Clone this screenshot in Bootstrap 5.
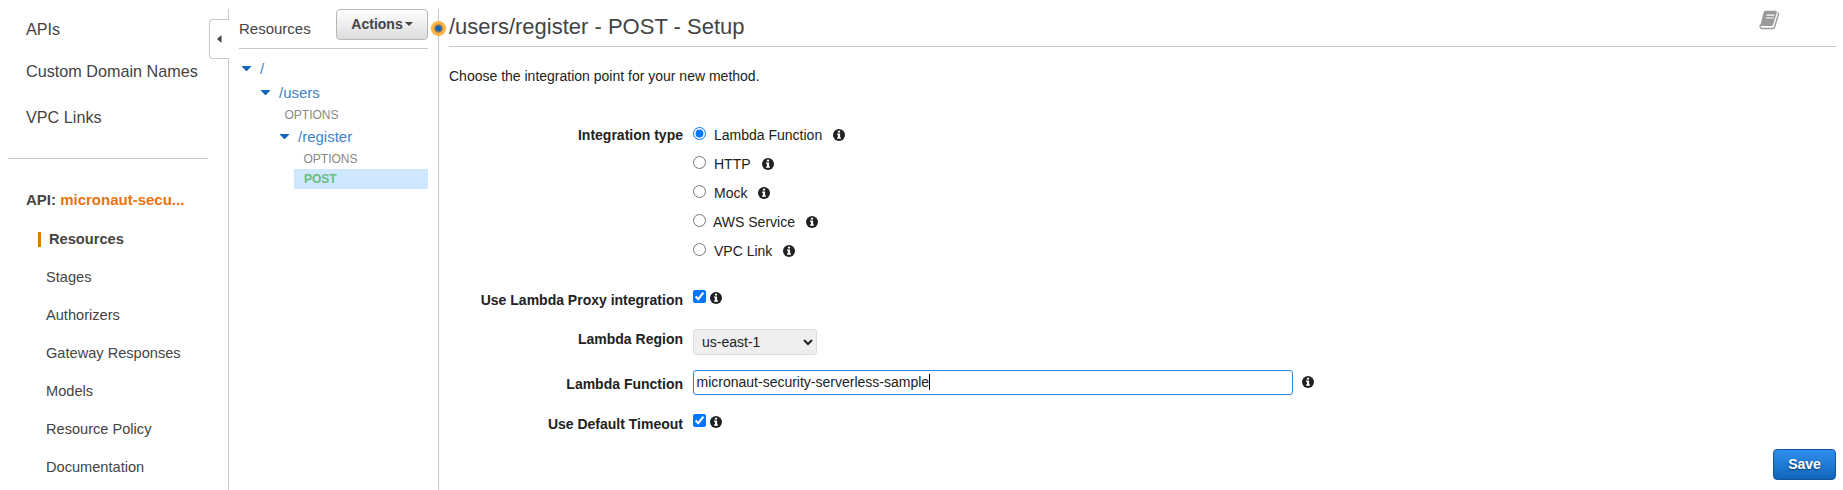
<!DOCTYPE html>
<html lang="en">
<head>
<meta charset="utf-8">
<title>API Gateway</title>
<link href="https://cdn.jsdelivr.net/npm/bootstrap@5.3.0/dist/css/bootstrap.min.css" rel="stylesheet">
<script src="https://cdn.jsdelivr.net/npm/bootstrap@5.3.0/dist/js/bootstrap.bundle.min.js"></script>
<style>
body{font-family:"Liberation Sans",Arial,sans-serif;font-size:14px;line-height:20px;color:#222;background:#fff;height:490px;overflow:hidden}
a{text-decoration:none;color:inherit}
.side{width:229px;margin-top:9px;padding-top:10px;border-right:1px solid #c8c8c8;color:#444;position:relative;height:481px}
.top-link{font-size:16.2px;line-height:20px;padding-left:26px}
.rule{height:1px;background:#c8c8c8}
.side .rule{margin:31px 20px 31px 8px}
.api-title{font-size:15px;font-weight:700;padding-left:26px}
.api-title span{color:#ec7211}
.sub-link{font-size:14.6px;height:38px;padding-left:46px}
.current-link{height:15px;line-height:15px;font-size:14.65px;font-weight:700;border-left:3px solid #e07b00;margin:22px 0 20px 38px;padding-left:8px}
.tab-handle{position:absolute;left:209px;top:10px;width:20px;height:40px;background:#fff;border:1px solid #c8c8c8;border-right:0;border-radius:4px 0 0 4px}
.tree{width:210px;margin-top:9px;height:481px;border-right:1px solid #c8c8c8;position:relative;padding:0 10px}
.tree-title{font-size:15px;color:#444;padding-top:10px}
.actions-btn{width:92px;height:31px;border:1px solid #b7b7b7;border-radius:4px;background:linear-gradient(#fff,#dcdcdc);font-size:14px;font-weight:700;color:#444;padding:0 0 1px}
.knob{position:absolute;left:201px;top:11px}
.node{font-size:15px;color:#3f83c9;line-height:20px}
.node svg{margin:-2px 9.5px 0 0}
.verb{font-size:12px;line-height:20px;color:#888}
.verb-on{background:#cfe7ff;color:#66bd7d;font-weight:700;margin-left:55px;padding-left:10px}
.pane{margin:0 7px 0 10px}
.pane h1{font-size:22px;line-height:26px;color:#444;margin:0}
.book{margin:-4px 56px 0 auto}
.lbl{width:234px;text-align:right;font-weight:700;margin-right:10px}
.pane input[type=radio],.pane input[type=checkbox]{width:13px;height:13px;margin:0;flex:none}
.pane input[type=radio]{margin-top:2px}
.opt{height:29px}
.opt span{margin:0 11px 0 8px}
.opt svg{margin-top:4px}
.check-info{margin:2px 0 0 4px}
.region{width:124px;height:26px;border:1px solid #ddd;border-radius:3px;background:#efefef;font-size:14px;padding:0 4px;color:#222}
.fn{width:600px;height:25px;border:1px solid #2f86dd;border-radius:3px;padding:0 2.5px;line-height:22px}
.caret-bar{display:inline-block;width:1px;height:16px;background:#000;vertical-align:-3px}
.save-btn{width:63px;height:31px;border:1px solid #11569c;border-radius:4px;background:linear-gradient(#2f8eed,#1166bb);color:#fff;font-weight:700;font-size:14px;padding:0;text-shadow:0 1px 2px #0008;margin-bottom:10px}
</style>
</head>
<body class="d-flex">
<svg width="0" height="0" class="position-absolute"><defs>
<symbol id="info" viewBox="0 0 12 12"><circle cx="6" cy="6" r="6" fill="#222"/><path fill="#fff" d="M4.900 1.700h2.200v1.800H4.900zM4 4.500h3.100v4h.9v1.300H4V8.500h.9V5.800H4z"/></symbol>
<symbol id="down" viewBox="0 0 9 5"><path d="M0 0h9v.8L4.900 5h-.8L0 .8z" fill="#1166bb"/></symbol>
</defs></svg>

<nav class="side flex-shrink-0">
  <div class="tab-handle"><svg class="d-block" width="19" height="38"><path d="M11.500 15v8l-4.500-4z" fill="#444"/></svg></div>
  <a class="top-link d-block">APIs</a>
  <a class="top-link d-block" style="margin-top:22px">Custom Domain Names</a>
  <a class="top-link d-block" style="margin-top:26px">VPC Links</a>
  <div class="rule"></div>
  <div class="api-title">API: <span>micronaut-secu...</span></div>
  <div class="current-link">Resources</div>
  <a class="sub-link d-block">Stages</a>
  <a class="sub-link d-block">Authorizers</a>
  <a class="sub-link d-block">Gateway Responses</a>
  <a class="sub-link d-block">Models</a>
  <a class="sub-link d-block">Resource Policy</a>
  <a class="sub-link d-block">Documentation</a>
</nav>

<section class="tree flex-shrink-0">
  <svg class="knob" width="17" height="17"><circle cx="8.500" cy="8.500" r="7.600" fill="#ffb347"/><circle cx="8.500" cy="8.500" r="4.300" fill="#8a7d55"/><circle cx="8.500" cy="8.500" r="2.800" fill="#1166bb"/></svg>
  <div class="d-flex justify-content-between" style="height:39px">
    <div class="tree-title">Resources</div>
    <button class="btn actions-btn d-flex align-items-center justify-content-center">Actions<svg width="8" height="4" style="margin-left:2px"><path d="M0 0h8L4 4z" fill="#444"/></svg></button>
  </div>
  <div class="rule"></div>
  <div class="node d-flex align-items-center" style="margin-top:10px;padding-left:2.500px"><svg width="9" height="5"><use href="#down"/></svg>/</div>
  <div class="node d-flex align-items-center" style="margin-top:4px;padding-left:21.500px"><svg width="9" height="5"><use href="#down"/></svg>/users</div>
  <div class="verb" style="margin-top:2px;padding-left:45.500px">OPTIONS</div>
  <div class="node d-flex align-items-center" style="margin-top:2px;padding-left:40.500px"><svg width="9" height="5"><use href="#down"/></svg>/register</div>
  <div class="verb" style="margin-top:2px;padding-left:64.500px">OPTIONS</div>
  <div class="verb verb-on">POST</div>
</section>

<main class="pane flex-grow-1 d-flex flex-column">
  <div class="d-flex" style="height:46px;padding-top:14px">
    <h1 class="fw-normal">/users/register - POST - Setup</h1>
    <svg class="book flex-shrink-0" width="21" height="20" viewBox="0 0 21 20"><path d="M6 .8h10.500q1.800 0 1.300 1.700L14.200 14.600q-.5 1.500-2.200 1.500H2.500q-1.400 0-1-1.400L4.600 2.500Q5 .8 6 .8z" fill="#999"/><path d="M1.500 14.500q-1.300 4 1.500 4h10.800q1.300 0 1.700-1.300L19.500 4q.3-1-.9-1.500" fill="none" stroke="#999" stroke-width="1.300"/><path d="M7.500 5.200h8M6.800 8h8" stroke="#fff" stroke-width="1.200"/></svg>
  </div>
  <div class="rule"></div>
  <p class="mb-0" style="margin-top:19px">Choose the integration point for your new method.</p>

  <div class="d-flex" style="margin-top:39px">
    <div class="lbl">Integration type</div>
    <div>
      <label class="opt d-flex"><input type="radio" name="t" checked><span>Lambda Function</span><svg width="12" height="12"><use href="#info"/></svg></label>
      <label class="opt d-flex"><input type="radio" name="t"><span>HTTP</span><svg width="12" height="12"><use href="#info"/></svg></label>
      <label class="opt d-flex"><input type="radio" name="t"><span>Mock</span><svg width="12" height="12"><use href="#info"/></svg></label>
      <label class="opt d-flex"><input type="radio" name="t"><span style="margin-left:7px">AWS Service</span><svg width="12" height="12"><use href="#info"/></svg></label>
      <label class="opt d-flex"><input type="radio" name="t"><span>VPC Link</span><svg width="12" height="12"><use href="#info"/></svg></label>
    </div>
  </div>
  <div class="d-flex" style="margin-top:20px;height:39px">
    <div class="lbl">Use Lambda Proxy integration</div>
    <input type="checkbox" checked><svg class="check-info" width="12" height="12"><use href="#info"/></svg>
  </div>
  <div class="d-flex" style="height:41px">
    <div class="lbl">Lambda Region</div>
    <select class="region"><option>us-east-1</option></select>
  </div>
  <div class="d-flex" style="height:44px">
    <div class="lbl" style="padding-top:4px">Lambda Function</div>
    <div class="fn">micronaut-security-serverless-sample<span class="caret-bar"></span></div><svg width="12" height="12" style="margin:6px 0 0 9px"><use href="#info"/></svg>
  </div>
  <div class="d-flex">
    <div class="lbl">Use Default Timeout</div>
    <input type="checkbox" checked><svg class="check-info" width="12" height="12"><use href="#info"/></svg>
  </div>
  <button class="btn save-btn ms-auto mt-auto">Save</button>
</main>
</body>
</html>
